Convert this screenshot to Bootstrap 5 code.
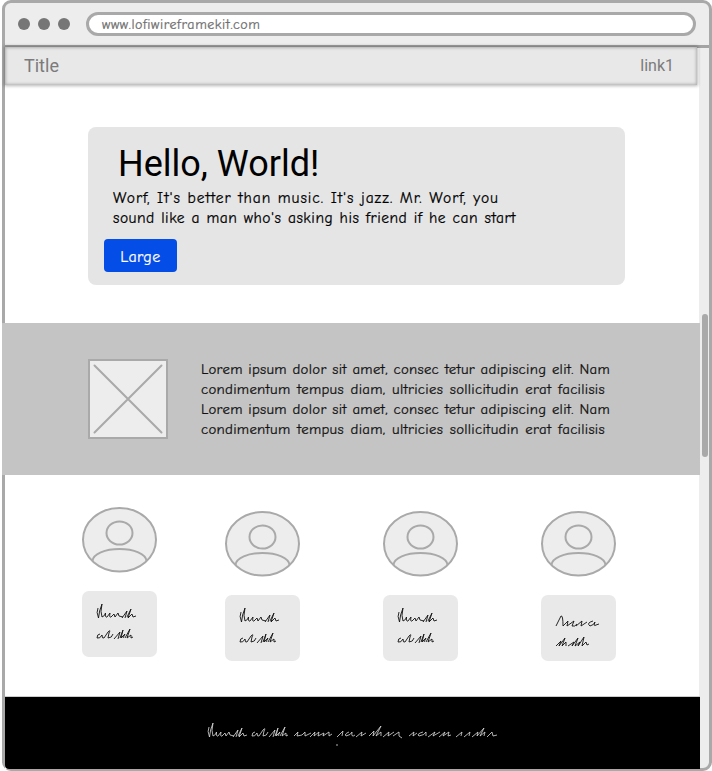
<!DOCTYPE html>
<html lang="en">
<head>
<meta charset="utf-8">
<meta name="viewport" content="width=device-width, initial-scale=1">
<title>Title</title>
<link href="https://cdn.jsdelivr.net/npm/bootstrap@5.3.0/dist/css/bootstrap.min.css" rel="stylesheet">
<style>
  body { font-family: Roboto, sans-serif; background: #fff; overflow: hidden; }
  .hand { font-family: "Comic Neue", Lato, sans-serif; -webkit-text-stroke: .22px currentColor; }
  .browser { width: 710px; height: 771px; margin-left: 2px; border: 3px solid #a9a9a9; border-radius: 9px; background: #ededed; }
  .chrome-bar { height: 45px; border-bottom: 3px solid #a3a3a3; padding: 0 13px 0 13px; gap: 8px; }
  .dot { width: 12px; height: 12px; background: #767676; }
  .address { height: 24px; border: 3px solid #a9a9a9; margin-left: 8px; padding-left: 13px; font-size: 14px; line-height: 19px; letter-spacing: .54px; color: #6e6e6e; }
  .fit { display: block; white-space: nowrap; text-align-last: justify; }
  .viewport { width: 694px; background: #fff; }
  .topnav { width: 692px; height: 38px; margin-top: -1px; padding: 0 23px 0 19px; background: #e8e8e8; box-shadow: 0 0 3px 1px rgba(0,0,0,.28), inset 0 0 3px 1px rgba(0,0,0,.24); color: #7b7b7b; }
  .topnav .navbar-brand { font-size: 18px; color: inherit; line-height: 38px; }
  .topnav .nav-link { font-size: 16px; color: inherit; line-height: 38px; }
  .hero { width: 537px; height: 158px; margin: 42px 0 0 83px; border-radius: 8px; background: #e5e5e5; color: #000; padding: 16px; }
  .hero h1 { font-size: 36px; line-height: 42px; font-weight: 400; margin: 0 0 3px 14px; }
  .hero-copy { font-size: 15.5px; line-height: 20px; margin: 0 0 11px 9px; letter-spacing: .5px; }
  .hero-copy .w-385 { letter-spacing: .95px; }
  .btn-hero { width: 73px; height: 33px; font-size: 16px; letter-spacing: .4px; background: #054de7; color: #fff; border-radius: 4px; padding: 0; line-height: 36px; border: 0; }
  .w-385 { width: 386px; } .w-403 { width: 403px; } .w-409 { width: 409px; } .w-404 { width: 404px; } .w-158 { width: 158px; }
  .band { width: 698px; height: 152px; margin: 38px 0 0 -3px; background: #c4c4c4; padding: 36px 0 0 86px; gap: 33px; }
  .band-copy { font-size: 14.8px; line-height: 20px; margin-top: 1px; color: #111; letter-spacing: .3px; }
  .team { height: 222px; padding: 32px 0 0 77px; }
  .member { width: 75px; }
  .member + .member { margin-left: 83px; padding-top: 4px; }
  .member:nth-child(2) { margin-left: 68px; }
  .note { height: 65.5px; margin-top: 18.400px; border-radius: 7px; background: #e9e9e9; }
  .site-footer { width: 695px; height: 72px; background: #000; border-radius: 0 0 0 4px; box-shadow: 0 -1px 0 #ccc; }
  .rail { width: 10px; padding: 266px 1px 0 3px; }
  .thumb { width: 6px; height: 143px; background: #a9a9a9; }
</style>
<script src="https://cdn.jsdelivr.net/npm/bootstrap@5.3.0/dist/js/bootstrap.bundle.min.js"></script>
</head>
<body>
<svg class="d-none">
  <defs>
    <symbol id="avatar" viewBox="0 0 75 66">
      <g fill="#ededed" stroke="#a9a9a9" stroke-width="2">
        <ellipse cx="37.5" cy="32.8" rx="36.5" ry="31.8"/>
        <ellipse cx="37.5" cy="26" rx="13" ry="11.5"/>
        <path d="M10.5 54C11 47 23 42 37.500 42S64 47 64.500 54" fill="none"/>
      </g>
    </symbol>
    <g id="s1"><path d="M2 5Q0 9 2.500 15Q3 8 6 1Q4 9 6 14Q9 13 9.500 10Q9 15 11 14L14 10Q13 15 15 14L18 11L19 14L22 10L23 13L27 14M26 15L31 8L29 15M31 14L35 6L32 15L36 11L37 14L40 13"/></g>
    <g id="s2"><path d="M4 10Q1 10 1 14Q4 15 6 11Q6 15 8 14L12 8Q15 5 13 9L12 14Q16 14 17 10M18 15L24 8L22 15M24 14L27 6L25 14L29 10L27 14M29 14L34 5L31 14L35 11L35 14L37 13"/></g>
  </defs>
</svg>
<div class="browser d-flex flex-column">
  <header class="chrome-bar d-flex align-items-center flex-shrink-0">
    <span class="dot rounded-circle"></span><span class="dot rounded-circle"></span><span class="dot rounded-circle"></span>
    <div class="address hand bg-white rounded-pill flex-grow-1"><span class="fit w-158">www.lofiwireframekit.com</span></div>
  </header>
  <div class="d-flex flex-grow-1">
    <main class="viewport flex-shrink-0">
      <nav class="topnav navbar justify-content-between align-items-start">
        <a class="navbar-brand p-0 m-0" href="#">Title</a>
        <a class="nav-link p-0" href="#">link1</a>
      </nav>
      <section class="hero">
        <h1>Hello, World!</h1>
        <p class="hero-copy hand"><span class="fit w-385">Worf, It's better than music. It's jazz. Mr. Worf, you</span><span class="fit w-403">sound like a man who's asking his friend if he can start</span></p>
        <button type="button" class="btn btn-hero hand">Large</button>
      </section>
      <section class="band d-flex align-items-start">
        <svg width="80" height="80" viewBox="0 0 80 80" fill="none" stroke="#a9a9a9" stroke-width="2" stroke-linecap="round"><path d="M1 1H79V79H1Z" fill="#ededed"/><path d="M6.500 6.500L73.500 73.500M73.500 6.500L6.500 73.500"/></svg>
        <p class="band-copy hand mb-0">
          <span class="fit w-409">Lorem ipsum dolor sit amet, consec tetur adipiscing elit. Nam</span>
          <span class="fit w-404">condimentum tempus diam, ultricies sollicitudin erat facilisis</span>
          <span class="fit w-409">Lorem ipsum dolor sit amet, consec tetur adipiscing elit. Nam</span>
          <span class="fit w-404">condimentum tempus diam, ultricies sollicitudin erat facilisis</span>
        </p>
      </section>
      <section class="team d-flex align-items-start">
        <div class="member"><svg class="d-block" width="75" height="66"><use href="#avatar"/></svg><div class="note"><svg class="d-block" width="75" height="65" fill="none" stroke="#111" stroke-width=".9"><use href="#s1" x="14" y="12"/><use href="#s2" x="14" y="33"/></svg></div></div>
        <div class="member"><svg class="d-block" width="75" height="66"><use href="#avatar"/></svg><div class="note"><svg class="d-block" width="75" height="65" fill="none" stroke="#111" stroke-width=".9"><use href="#s1" x="14" y="12"/><use href="#s2" x="14" y="33"/></svg></div></div>
        <div class="member"><svg class="d-block" width="75" height="66"><use href="#avatar"/></svg><div class="note"><svg class="d-block" width="75" height="65" fill="none" stroke="#111" stroke-width=".9"><use href="#s1" x="14" y="12"/><use href="#s2" x="14" y="33"/></svg></div></div>
        <div class="member"><svg class="d-block" width="75" height="66"><use href="#avatar"/></svg><div class="note"><svg class="d-block" width="75" height="65" fill="none" stroke="#111" stroke-width=".9"><path d="M15 31L20 21Q22 20 22 31L27 26L26 31L33 26L31 31Q34 32 36 29M35 31L41 26L40 31L46 27M52 26Q45 28 49 31Q53 30 54 27Q52 32 55 30L58 29"/><path d="M15 51L20 46L18 51L24 43L21 51L25 47L25 51M27 51L33 47L31 51L37 43L34 51L39 47L37 51L43 42L41 51L45 47L46 50L48 49"/></svg></div></div>
      </section>
      <footer class="site-footer">
        <svg class="d-block" width="695" height="71" fill="none" stroke="#ddd" stroke-width=".8"><use href="#s1" x="202" y="25"/><use href="#s2" x="246" y="25"/>
        <path d="M289 39L293 35L292 39L297 38L300 35L300 39L306 36M305 40L310 35L309 39L314 35L313 39L319 36L318 39L324 35L324 39L327 37M332 40L338 34L337 39M344 35Q339 37 341 39Q346 38 347 35Q346 41 350 38M351 40L357 35L356 39L361 36M364 39L369 34L368 39L376 29L371 39L376 35L376 39M378 40L384 35L383 39L389 35M388 39L394 35L394 39L397 41M404 39L409 35L408 39L412 36M418 35Q411 37 414 39Q420 38 421 35L421 39M423 40L430 35L428 39L435 35M434 40L440 35L438 39L444 35L443 39L446 38M451 40L457 35L456 39M459 40L465 35L464 39M467 40L473 35L472 39L479 31L475 39L480 35L479 39M482 40L487 35L488 39L492 38M331 48L333 48"/></svg>
      </footer>
    </main>
    <aside class="rail flex-shrink-0"><div class="thumb rounded-pill"></div></aside>
  </div>
</div>
</body>
</html>
